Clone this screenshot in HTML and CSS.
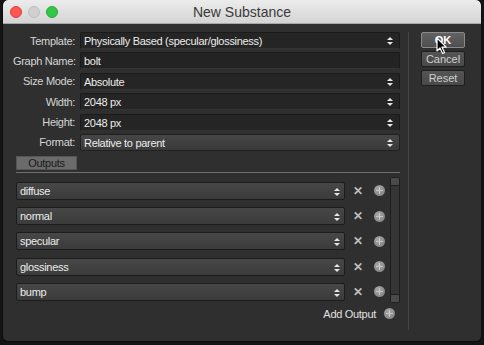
FILE: index.html
```html
<!DOCTYPE html>
<html lang="en">
<head>
    <meta charset="UTF-8">
    <title>New Substance</title>
    <link rel="stylesheet" href="styles.css">
</head>
<body>
    <div class="window">
        <div class="titlebar">
            <div class="lights">
                <span class="light red"></span>
                <span class="light gray"></span>
                <span class="light green"></span>
            </div>
            <div class="title">New Substance</div>
        </div>

        <div class="content">
            <div class="main">
                <div class="row">
                    <label>Template:</label>
                    <div class="select">Physically Based (specular/glossiness)<span class="stepper"></span></div>
                </div>
                <div class="row">
                    <label>Graph Name:</label>
                    <div class="select input">bolt</div>
                </div>
                <div class="row">
                    <label>Size Mode:</label>
                    <div class="select">Absolute<span class="stepper"></span></div>
                </div>
                <div class="row">
                    <label>Width:</label>
                    <div class="select">2048 px<span class="stepper"></span></div>
                </div>
                <div class="row">
                    <label>Height:</label>
                    <div class="select">2048 px<span class="stepper"></span></div>
                </div>
                <div class="row">
                    <label>Format:</label>
                    <div class="select light-select">Relative to parent<span class="stepper"></span></div>
                </div>

                <div class="tabs">
                    <div class="tab">Outputs</div>
                </div>

                <div class="outputs">
                    <div class="output-list">
                        <div class="output">
                            <div class="select out-select">diffuse<span class="stepper"></span></div>
                            <span class="remove">&#x2715;</span>
                            <span class="plus"></span>
                        </div>
                        <div class="output">
                            <div class="select out-select">normal<span class="stepper"></span></div>
                            <span class="remove">&#x2715;</span>
                            <span class="plus"></span>
                        </div>
                        <div class="output">
                            <div class="select out-select">specular<span class="stepper"></span></div>
                            <span class="remove">&#x2715;</span>
                            <span class="plus"></span>
                        </div>
                        <div class="output">
                            <div class="select out-select">glossiness<span class="stepper"></span></div>
                            <span class="remove">&#x2715;</span>
                            <span class="plus"></span>
                        </div>
                        <div class="output">
                            <div class="select out-select">bump<span class="stepper"></span></div>
                            <span class="remove">&#x2715;</span>
                            <span class="plus"></span>
                        </div>
                    </div>
                    <div class="scrollbar">
                        <div class="scroll-cap"></div>
                        <div class="scroll-track"></div>
                        <div class="scroll-cap"></div>
                    </div>
                </div>

                <div class="add-output">
                    <span>Add Output</span>
                    <span class="plus"></span>
                </div>
            </div>

            <div class="side">
                <button class="btn btn-ok">OK</button>
                <button class="btn">Cancel</button>
                <button class="btn">Reset</button>
                <svg class="cursor" width="12" height="18" viewBox="0 0 12 18">
                    <path d="M1 1 L1 14 L4 11 L6.5 16.5 L8.5 15.6 L6 10.2 L10.2 10.2 Z" fill="#000" stroke="#fff" stroke-width="1.2" stroke-linejoin="round"/>
                </svg>
            </div>
        </div>
    </div>
</body>
</html>
```

FILE: styles.css
```css
body {
    margin: 0;
    padding: 0;
    background-color: #141414;
    font-family: 'Liberation Sans', Arial, sans-serif;
    font-size: 11px;
    letter-spacing: -0.3px;
    color: #dcdcdc;
    width: 484px;
    height: 345px;
    overflow: hidden;
}
.window {
    margin: 0 3px;
    height: 341px;
    background-color: #2f2f2f;
    border-radius: 5px;
    overflow: hidden;
    box-shadow: 0 0 0 1px #0c0c0c;
}
.titlebar {
    height: 24px;
    background: linear-gradient(#ececec, #d4d4d4);
    border-bottom: 1px solid #a8a8a8;
    border-radius: 5px 5px 0 0;
    position: relative;
    display: flex;
    align-items: center;
    box-sizing: border-box;
}
.lights {
    display: flex;
    gap: 6px;
    padding-left: 7px;
}
.light {
    width: 12px;
    height: 12px;
    border-radius: 50%;
    box-sizing: border-box;
}
.red {
    background: #fc5753;
    border: 1px solid #df3d39;
}
.gray {
    background: #d0d0d0;
    border: 1px solid #bdbdbd;
}
.green {
    background: #33c748;
    border: 1px solid #27a93a;
}
.title {
    position: absolute;
    left: 0;
    right: 0;
    text-align: center;
    font-size: 14px;
    letter-spacing: 0;
    color: #3a3a3a;
}
.content {
    display: flex;
    height: 316px;
}
.main {
    flex: none;
    width: 405px;
    box-sizing: border-box;
    padding: 8px 8px 0 10px;
}
.row {
    display: flex;
    align-items: center;
    height: 17px;
    margin-bottom: 3.4px;
}
.row label {
    flex: none;
    width: 62px;
    white-space: nowrap;
    text-align: right;
    margin-right: 5px;
    color: #d6d6d6;
}
.select {
    position: relative;
    flex: 1;
    height: 17px;
    line-height: 16px;
    box-sizing: border-box;
    padding-left: 3px;
    background-color: #252525;
    border: 1px solid #1b1b1b;
    border-bottom-color: #333;
    border-radius: 2px;
    color: #ececec;
    white-space: nowrap;
}
.input {
    background-color: #232323;
}
.light-select {
    background: linear-gradient(#464646, #3a3a3a);
    border-color: #202020;
}
.stepper {
    position: absolute;
    right: 6px;
    top: 4px;
    width: 6px;
    height: 8px;
}
.stepper::before,
.stepper::after {
    content: '';
    position: absolute;
    left: 0;
    border-left: 3px solid transparent;
    border-right: 3px solid transparent;
}
.stepper::before {
    top: 0;
    border-bottom: 3px solid #e6e6e6;
}
.stepper::after {
    bottom: 0;
    border-top: 3px solid #e6e6e6;
}
.tabs {
    margin-top: 5px;
    height: 16px;
    border-bottom: 1px solid #707070;
    margin-left: 3px;
}
.tab {
    width: 61px;
    height: 14px;
    line-height: 13px;
    text-align: center;
    background-color: #6b6b6b;
    color: #1a1a1a;
    border: 1px solid #555;
    box-sizing: border-box;
}
.outputs {
    display: flex;
    margin-top: 4px;
    padding-left: 3px;
}
.output-list {
    width: 374px;
    padding-top: 5px;
}
.output {
    display: flex;
    align-items: center;
    height: 18px;
    margin-bottom: 7.2px;
}
.out-select {
    flex: none;
    width: 329px;
    height: 18px;
    line-height: 17px;
    background: linear-gradient(#474747, #3b3b3b);
    border-color: #1c1c1c;
}
.out-select .stepper {
    top: 5px;
    right: 4px;
}
.remove {
    width: 26px;
    text-align: center;
    font-size: 12px;
    font-weight: bold;
    color: #bdbdbd;
}
.plus {
    position: relative;
    flex: none;
    width: 11px;
    height: 11px;
    border-radius: 50%;
    background: radial-gradient(circle at 40% 35%, #a8a8a8, #7a7a7a);
    margin-left: 3px;
}
.plus::before,
.plus::after {
    content: '';
    position: absolute;
    background-color: #c8c8c8;
}
.plus::before {
    left: 5px;
    top: 2px;
    width: 1px;
    height: 7px;
}
.plus::after {
    left: 2px;
    top: 5px;
    width: 7px;
    height: 1px;
}
.scrollbar {
    width: 8px;
    height: 124px;
    display: flex;
    flex-direction: column;
    border: 1px solid #1d1d1d;
    border-radius: 2px;
    background-color: #3c3c3c;
}
.scroll-cap {
    height: 7px;
    background-color: #4a4a4a;
}
.scroll-track {
    flex: 1;
    background-color: #353535;
    border-top: 1px solid #1d1d1d;
    border-bottom: 1px solid #1d1d1d;
}
.add-output {
    display: flex;
    justify-content: flex-end;
    align-items: center;
    margin-top: 0;
    padding-right: 5px;
    color: #e0e0e0;
}
.add-output .plus {
    margin-left: 8px;
}
.side {
    position: relative;
    margin-top: 8px;
    height: 298px;
    border-left: 1px solid #434343;
    padding-left: 12px;
    display: flex;
    flex-direction: column;
    gap: 3px;
}
.btn {
    width: 44px;
    height: 16px;
    padding: 0;
    font-family: 'Liberation Sans', Arial, sans-serif;
    font-size: 11px;
    color: #d0d0d0;
    background: linear-gradient(#555, #494949);
    border: 1px solid #1e1e1e;
    border-radius: 2px;
}
.btn-ok {
    color: #fff;
    font-weight: bold;
    background: linear-gradient(#626262, #4f4f4f);
    border-color: #8a8a8a;
}
.cursor {
    position: absolute;
    left: 27px;
    top: 5px;
}
```
